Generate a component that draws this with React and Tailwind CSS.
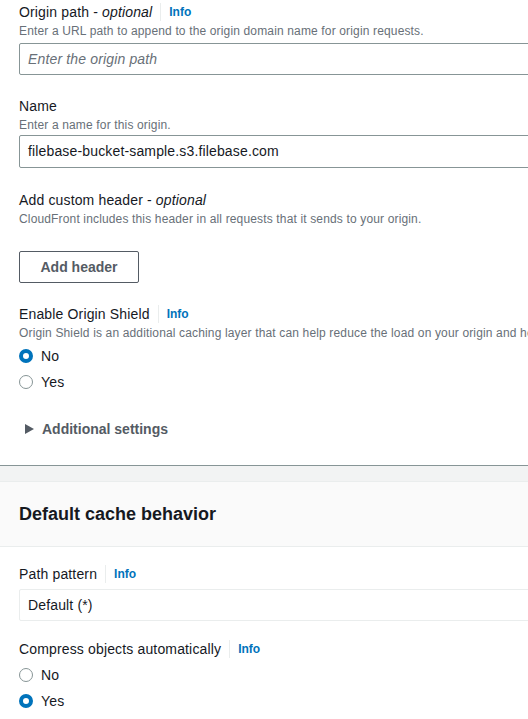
import React from "react";

const font = { fontFamily: '"Liberation Sans", Arial, sans-serif' };

function Info() {
  return (
    <span className="flex items-center">
      <span className="mx-[8px] h-[18px] w-px bg-[#eaeded]" />
      <span className="text-[12px] font-bold tracking-normal text-[#0073bb]">Info</span>
    </span>
  );
}

function Radio({ checked, label }) {
  return (
    <div className="flex h-[26px] items-center">
      {checked ? (
        <span className="box-border h-[14px] w-[14px] rounded-full border-[4px] border-[#0073bb] bg-white" />
      ) : (
        <span className="box-border h-[14px] w-[14px] rounded-full border-[1.5px] border-[#879596] bg-white" />
      )}
      <span className="ml-[8px] text-[14px] text-[#16191f]">{label}</span>
    </div>
  );
}

export default function App() {
  return (
    <div className="w-[528px] h-[719px] overflow-hidden bg-white text-[#16191f] tracking-[0.15px]" style={font}>
      <div className="pl-[19px] pt-[1px]">
        <div className="flex h-[22px] items-center text-[14px]">
          <span>
            Origin path - <i>optional</i>
          </span>
          <Info />
        </div>
        <div className="h-[16px] text-[12px] leading-[16px] text-[#687078]">
          Enter a URL path to append to the origin domain name for origin requests.
        </div>
        <div className="mt-[4px] flex h-[32px] w-[600px] items-center rounded-[2px] border border-[#879596] px-[8px] text-[14px] italic text-[#687078]">
          Enter the origin path
        </div>

        <div className="mt-[20px] flex h-[22px] items-center text-[14px]">Name</div>
        <div className="h-[16px] text-[12px] leading-[16px] text-[#687078]">
          Enter a name for this origin.
        </div>
        <div className="mt-[2px] flex h-[33px] w-[600px] items-center rounded-[2px] border border-[#879596] px-[8px] text-[14px] text-[#16191f]">
          filebase-bucket-sample.s3.filebase.com
        </div>

        <div className="mt-[21px] flex h-[22px] items-center text-[14px]">
          <span>
            Add custom header - <i>optional</i>
          </span>
        </div>
        <div className="h-[16px] text-[12px] leading-[16px] text-[#687078]">
          CloudFront includes this header in all requests that it sends to your origin.
        </div>
        <div className="mt-[24px] flex h-[32px] w-[120px] items-center justify-center rounded-[2px] border border-[#545b64] text-[14px] font-bold tracking-normal text-[#545b64]">
          Add header
        </div>

        <div className="mt-[20px] flex h-[22px] items-center text-[14px]">
          <span>Enable Origin Shield</span>
          <Info />
        </div>
        <div className="h-[16px] whitespace-nowrap text-[12px] leading-[16px] text-[#687078]">
          Origin Shield is an additional caching layer that can help reduce the load on your origin and help protect its availability.
        </div>
        <div className="mt-[2px]">
          <Radio checked label="No" />
          <Radio label="Yes" />
        </div>

        <div className="mt-[23px] flex h-[22px] items-center">
          <svg width="9" height="10" viewBox="0 0 9 10" className="ml-[6px]">
            <path d="M0 0 L9 5 L0 10 Z" fill="#545b64" />
          </svg>
          <span className="ml-[8px] text-[14px] font-bold tracking-normal text-[#545b64]">Additional settings</span>
        </div>
      </div>

      <div className="mt-[25px] h-px bg-[#879596]" />
      <div className="h-[15px] bg-[#f2f3f3]" />
      <div className="flex h-[66px] items-center border-y border-[#eaeded] bg-[#fafafa] pl-[19px]">
        <span className="text-[18px] font-bold tracking-normal text-[#16191f]">Default cache behavior</span>
      </div>

      <div className="pl-[19px]">
        <div className="mt-[16px] flex h-[22px] items-center text-[14px]">
          <span>Path pattern</span>
          <Info />
        </div>
        <div className="mt-[4px] flex h-[32px] w-[600px] items-center rounded-[2px] border border-[#eaeded] px-[8px] text-[14px] text-[#16191f]">
          Default (*)
        </div>

        <div className="mt-[17px] flex h-[22px] items-center text-[14px]">
          <span>Compress objects automatically</span>
          <Info />
        </div>
        <div className="mt-[2px]">
          <Radio label="No" />
          <Radio checked label="Yes" />
        </div>
      </div>
    </div>
  );
}
